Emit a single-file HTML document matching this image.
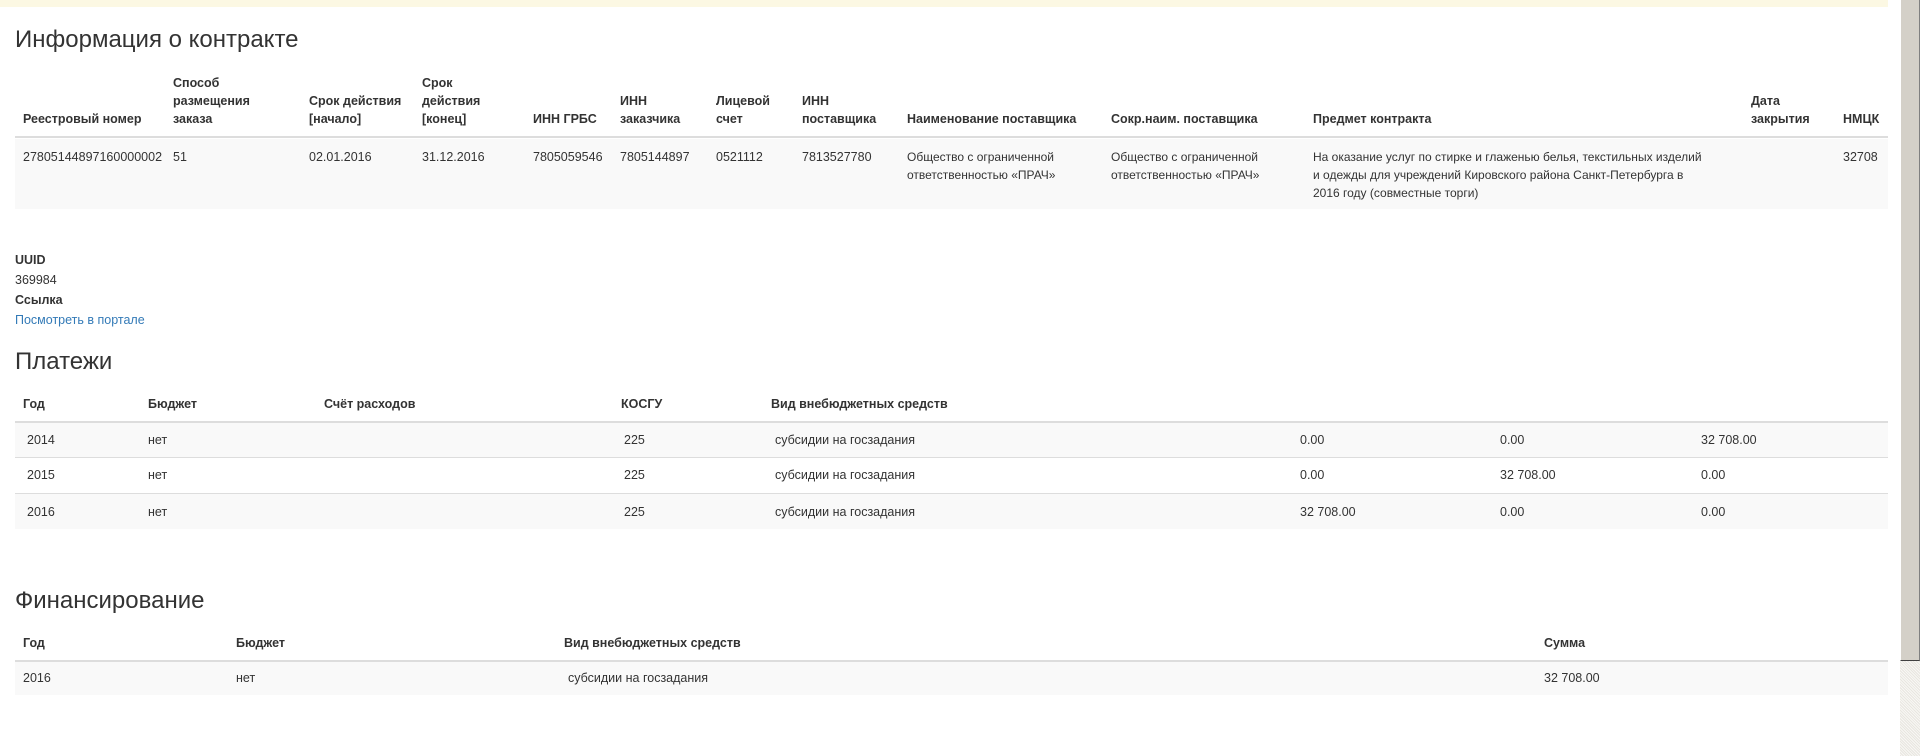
<!DOCTYPE html>
<html><head><meta charset="utf-8"><style>
*{margin:0;padding:0;box-sizing:border-box}
body{width:1920px;height:756px;overflow:hidden;background:#fff;font-family:"Liberation Sans",Arial,sans-serif;color:#333;font-size:12.5px;position:relative}
.a{position:absolute;white-space:nowrap;line-height:18px}
.b{font-weight:bold}
h2{position:absolute;font-weight:normal;font-size:24px;color:#333;left:15px;line-height:28px}
.bg{position:absolute;background:#f9f9f9}
.ln{position:absolute;background:#ddd}
</style></head><body>
<div style="position:absolute;left:0;top:0;width:1888px;height:7px;background:#fcf8e3"></div>
<div style="position:absolute;left:1900px;top:0;width:20px;height:661px;background:#d4d0c8;border-left:1px solid #fff;border-right:1px solid #808080;border-bottom:1px solid #404040"></div>
<div style="position:absolute;left:1900px;top:661px;width:20px;height:95px;background:repeating-linear-gradient(45deg,#e8e6e0 0 1px,#f8f7f4 1px 2px)"></div>

<h2 style="top:26px">Информация о контракте</h2>
<div class="bg" style="left:15px;top:139px;width:1873px;height:70px"></div>
<div class="ln" style="left:15px;top:136px;width:1873px;height:2px"></div>
<div class="a b" style="left:23px;top:110px">Реестровый номер</div>
<div class="a b" style="left:173px;top:74px">Способ<br>размещения<br>заказа</div>
<div class="a b" style="left:309px;top:92px">Срок действия<br>[начало]</div>
<div class="a b" style="left:422px;top:74px">Срок<br>действия<br>[конец]</div>
<div class="a b" style="left:533px;top:110px">ИНН ГРБС</div>
<div class="a b" style="left:620px;top:92px">ИНН<br>заказчика</div>
<div class="a b" style="left:716px;top:92px">Лицевой<br>счет</div>
<div class="a b" style="left:802px;top:92px">ИНН<br>поставщика</div>
<div class="a b" style="left:907px;top:110px">Наименование поставщика</div>
<div class="a b" style="left:1111px;top:110px">Сокр.наим. поставщика</div>
<div class="a b" style="left:1313px;top:110px">Предмет контракта</div>
<div class="a b" style="left:1751px;top:92px">Дата<br>закрытия</div>
<div class="a b" style="left:1843px;top:110px">НМЦК</div>

<div class="a" style="left:23px;top:148px">27805144897160000002</div>
<div class="a" style="left:173px;top:148px">51</div>
<div class="a" style="left:309px;top:148px">02.01.2016</div>
<div class="a" style="left:422px;top:148px">31.12.2016</div>
<div class="a" style="left:533px;top:148px">7805059546</div>
<div class="a" style="left:620px;top:148px">7805144897</div>
<div class="a" style="left:716px;top:148px">0521112</div>
<div class="a" style="left:802px;top:148px">7813527780</div>
<div class="a" style="left:907px;top:148px;font-size:12px">Общество с ограниченной<br>ответственностью «ПРАЧ»</div>
<div class="a" style="left:1111px;top:148px;font-size:12px">Общество с ограниченной<br>ответственностью «ПРАЧ»</div>
<div class="a" style="left:1313px;top:148px;font-size:12px">На оказание услуг по стирке и глаженью белья, текстильных изделий<br>и одежды для учреждений Кировского района Санкт-Петербурга в<br>2016 году (совместные торги)</div>
<div class="a" style="left:1843px;top:148px">32708</div>

<div class="a b" style="left:15px;top:251px">UUID</div>
<div class="a" style="left:15px;top:271px">369984</div>
<div class="a b" style="left:15px;top:291px">Ссылка</div>
<div class="a" style="left:15px;top:311px;color:#337ab7">Посмотреть в портале</div>

<h2 style="top:348px">Платежи</h2>
<div class="bg" style="left:15px;top:423px;width:1873px;height:34px"></div>
<div class="bg" style="left:15px;top:494px;width:1873px;height:35px"></div>
<div class="ln" style="left:15px;top:421px;width:1873px;height:2px"></div>
<div class="ln" style="left:15px;top:457px;width:1873px;height:1px"></div>
<div class="ln" style="left:15px;top:493px;width:1873px;height:1px"></div>
<div class="a b" style="left:23px;top:395px">Год</div>
<div class="a b" style="left:148px;top:395px">Бюджет</div>
<div class="a b" style="left:324px;top:395px">Счёт расходов</div>
<div class="a b" style="left:621px;top:395px">КОСГУ</div>
<div class="a b" style="left:771px;top:395px">Вид внебюджетных средств</div>

<div class="a" style="left:27px;top:431px">2014</div><div class="a" style="left:148px;top:431px">нет</div><div class="a" style="left:624px;top:431px">225</div><div class="a" style="left:775px;top:431px">субсидии на госзадания</div><div class="a" style="left:1300px;top:431px">0.00</div><div class="a" style="left:1500px;top:431px">0.00</div><div class="a" style="left:1701px;top:431px">32 708.00</div>
<div class="a" style="left:27px;top:466px">2015</div><div class="a" style="left:148px;top:466px">нет</div><div class="a" style="left:624px;top:466px">225</div><div class="a" style="left:775px;top:466px">субсидии на госзадания</div><div class="a" style="left:1300px;top:466px">0.00</div><div class="a" style="left:1500px;top:466px">32 708.00</div><div class="a" style="left:1701px;top:466px">0.00</div>
<div class="a" style="left:27px;top:503px">2016</div><div class="a" style="left:148px;top:503px">нет</div><div class="a" style="left:624px;top:503px">225</div><div class="a" style="left:775px;top:503px">субсидии на госзадания</div><div class="a" style="left:1300px;top:503px">32 708.00</div><div class="a" style="left:1500px;top:503px">0.00</div><div class="a" style="left:1701px;top:503px">0.00</div>

<h2 style="top:587px">Финансирование</h2>
<div class="bg" style="left:15px;top:662px;width:1873px;height:33px"></div>
<div class="ln" style="left:15px;top:660px;width:1873px;height:2px"></div>
<div class="a b" style="left:23px;top:634px">Год</div>
<div class="a b" style="left:236px;top:634px">Бюджет</div>
<div class="a b" style="left:564px;top:634px">Вид внебюджетных средств</div>
<div class="a b" style="left:1544px;top:634px">Сумма</div>
<div class="a" style="left:23px;top:669px">2016</div>
<div class="a" style="left:236px;top:669px">нет</div>
<div class="a" style="left:568px;top:669px">субсидии на госзадания</div>
<div class="a" style="left:1544px;top:669px">32 708.00</div>
</body></html>
